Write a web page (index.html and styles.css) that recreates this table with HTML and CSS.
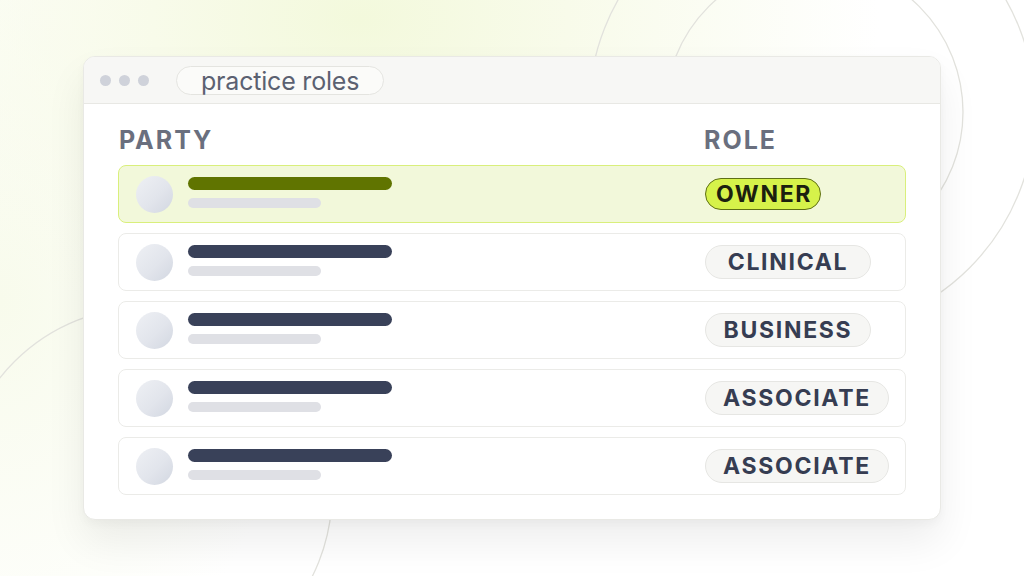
FILE: index.html
```html
<!DOCTYPE html>
<html lang="en">
<head>
<meta charset="utf-8">
<title>practice roles</title>
<link rel="stylesheet" href="styles.css">
</head>
<body>
<div class="stage">
  <svg class="deco" width="1024" height="576" viewBox="0 0 1024 576" aria-hidden="true">
    <circle cx="812" cy="110" r="223" />
    <circle cx="814" cy="112" r="149" />
    <circle cx="146" cy="493" r="186" />
  </svg>
  <div class="window">
    <div class="titlebar">
      <div class="dots"><span></span><span></span><span></span></div>
      <div class="tab">practice roles</div>
    </div>
    <div class="content">
      <div class="head">
        <div class="col-label">PARTY</div>
        <div class="col-label">ROLE</div>
      </div>
      <div class="rows">
        <div class="row row-owner">
          <div class="party"><span class="avatar"></span><span class="lines"><span class="line-main"></span><span class="line-sub"></span></span></div>
          <div class="role"><span class="badge badge-owner">OWNER</span></div>
        </div>
        <div class="row">
          <div class="party"><span class="avatar"></span><span class="lines"><span class="line-main"></span><span class="line-sub"></span></span></div>
          <div class="role"><span class="badge">CLINICAL</span></div>
        </div>
        <div class="row">
          <div class="party"><span class="avatar"></span><span class="lines"><span class="line-main"></span><span class="line-sub"></span></span></div>
          <div class="role"><span class="badge">BUSINESS</span></div>
        </div>
        <div class="row">
          <div class="party"><span class="avatar"></span><span class="lines"><span class="line-main"></span><span class="line-sub"></span></span></div>
          <div class="role"><span class="badge">ASSOCIATE</span></div>
        </div>
        <div class="row">
          <div class="party"><span class="avatar"></span><span class="lines"><span class="line-main"></span><span class="line-sub"></span></span></div>
          <div class="role"><span class="badge">ASSOCIATE</span></div>
        </div>
      </div>
    </div>
  </div>
</div>
</body>
</html>
```

FILE: styles.css
```css
* { box-sizing: border-box; }
html, body { margin: 0; padding: 0; }
body {
  width: 1024px;
  height: 576px;
  overflow: hidden;
  font-family: Inter, "Noto Sans", "Liberation Sans", sans-serif;
  background: #ffffff;
}
.stage {
  position: relative;
  width: 1024px;
  height: 576px;
  display: flex;
  align-items: center;
  justify-content: center;
  background:
    radial-gradient(ellipse 520px 330px at 360px 20px, #f3f9dc 0%, #f8fbea 40%, rgba(255,255,255,0) 100%),
    radial-gradient(ellipse 300px 420px at 0px 300px, #f8fbec 0%, rgba(255,255,255,0) 100%),
    #ffffff;
}
.deco {
  position: absolute;
  left: 0;
  top: 0;
}
.deco circle {
  fill: none;
  stroke: #e2e2dd;
  stroke-width: 1.3;
}
.window {
  position: relative;
  width: 858px;
  height: 464px;
  background: #ffffff;
  border: 1px solid #e9e9e5;
  border-radius: 12px;
  box-shadow: 0 22px 40px rgba(0, 0, 0, 0.07), 0 4px 10px rgba(0,0,0,0.03);
  overflow: hidden;
  display: flex;
  flex-direction: column;
}
.titlebar {
  height: 47px;
  flex: none;
  background: #f7f7f5;
  border-bottom: 1px solid #e8e8e4;
  display: flex;
  align-items: center;
  padding-left: 16px;
  gap: 27px;
}
.dots { display: flex; gap: 8px; margin-top: 1px; }
.dots span {
  width: 11px;
  height: 11px;
  border-radius: 50%;
  background: #cfd2da;
}
.tab {
  height: 29px;
  padding: 0 24px;
  border: 1px solid #e4e4e0;
  border-radius: 15px;
  background: #fbfbf9;
  color: #5b6171;
  font-size: 25px;
  line-height: 26px;
  letter-spacing: -0.2px;
  display: flex;
  align-items: center;
  margin-top: 1px;
}
.content {
  padding: 20px 34px 0 34px;
}
.head {
  display: grid;
  grid-template-columns: 1fr 201px;
  padding: 0 1px;
  height: 31px;
  margin-bottom: 10px;
}
.col-label {
  font-size: 25px;
  line-height: 32px;
  font-weight: 700;
  letter-spacing: 2px;
  color: #6a6f7e;
}
.rows {
  display: flex;
  flex-direction: column;
  gap: 10px;
}
.row {
  height: 58px;
  display: grid;
  grid-template-columns: 1fr 200px;
  align-items: center;
  border: 1px solid #ebebe8;
  border-radius: 8px;
  background: #ffffff;
  padding-left: 17px;
}
.row-owner {
  background: #f2f8da;
  border-color: #d9ef7c;
}
.party {
  display: flex;
  align-items: center;
  gap: 15px;
}
.avatar {
  width: 37px;
  height: 37px;
  border-radius: 50%;
  background: linear-gradient(135deg, #eef0f4 0%, #e2e5ec 55%, #d2d7e1 100%);
  flex: none;
}
.lines {
  display: flex;
  flex-direction: column;
  gap: 8px;
  margin-top: -3px;
}
.line-main {
  display: block;
  width: 204px;
  height: 13px;
  border-radius: 7px;
  background: #394159;
}
.row-owner .line-main { background: #607400; }
.line-sub {
  display: block;
  width: 133px;
  height: 10px;
  border-radius: 5px;
  background: #dfe0e5;
}
.role {
  display: flex;
  align-items: center;
}
.badge {
  height: 34px;
  min-width: 166px;
  padding: 0 17px;
  display: inline-flex;
  align-items: center;
  justify-content: center;
  border: 1px solid #e6e6e3;
  border-radius: 17px;
  background: #f6f6f4;
  color: #363d52;
  font-size: 23px;
  font-weight: 700;
  letter-spacing: 1.7px;
}
.badge-owner {
  height: 32px;
  min-width: 0;
  padding: 0 8px 0 10px;
  background: #d6f24a;
  border-color: #5e6f14;
  color: #1b200f;
}
```
